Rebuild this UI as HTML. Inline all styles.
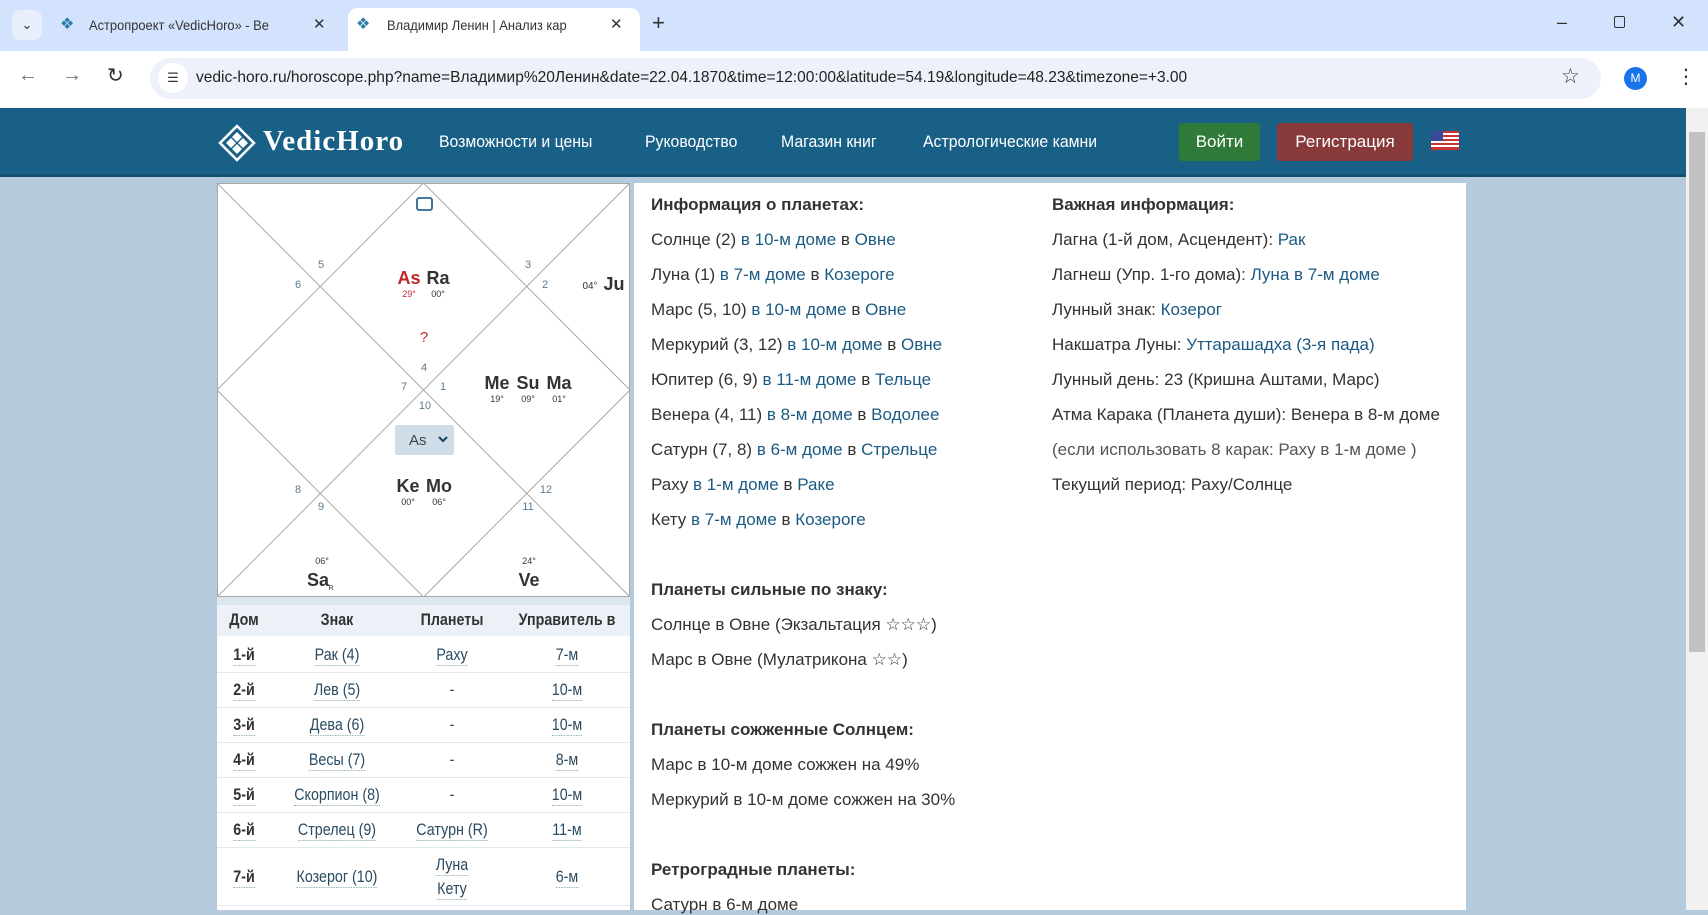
<!DOCTYPE html>
<html><head><meta charset="utf-8">
<style>
*{margin:0;padding:0;box-sizing:border-box}
body{width:1708px;height:910px;overflow:hidden;font-family:"Liberation Sans","DejaVu Sans",sans-serif;background:#b5cadd;position:relative}
.abs{position:absolute}
.tabs{left:0;top:0;width:1708px;height:51px;background:#d3e3fd}
.tab{top:8px;height:34px;font-size:14px;color:#333;line-height:34px}
.addr{left:0;top:51px;width:1708px;height:57px;background:#fff}
.omni{left:150px;top:58px;width:1451px;height:41px;border-radius:21px;background:#edf2fa}
.hdr{left:0;top:108px;width:1686px;height:69px;background:#196087;border-bottom:3px solid #145070}
.nav{color:#fff;font-size:17px;top:132px;transform-origin:left;transform:scaleX(.93);white-space:nowrap}
.btn{top:123px;height:38px;color:#fff;font-size:17px;line-height:38px;text-align:center;border-radius:3px}
.sb{left:1686px;top:108px;width:22px;height:802px;background:#f1f1f1}
.panel{background:#fff}
.txt{font-size:17px;color:#333;position:absolute;white-space:nowrap}
.txt a{color:#1b5a82;text-decoration:none}
.b{font-weight:bold;color:#333}
.tbl{font-size:17px;color:#2a4a60}
.c{position:absolute;transform:translateX(-50%) scaleX(.84);white-space:nowrap}
.u{border-bottom:1px dotted #8aa;}
.row{position:absolute;left:217px;width:413px;height:1px;background:#e3e9ee}
</style></head><body>
<div class="abs tabs"></div>
<div class="abs" style="left:12px;top:10px;width:30px;height:30px;border-radius:8px;background:#e8eefb;text-align:center;line-height:30px;font-size:13px;color:#333">&#8964;</div>
<div class="abs tab" style="left:60px;width:280px">
 <span style="position:absolute;left:0;top:0;color:#2a7fa8;font-size:16px">&#10070;</span>
 <span style="position:absolute;left:29px;transform-origin:left;transform:scaleX(.92)">Астропроект «VedicHoro» - Be</span>
 <span style="position:absolute;left:253px;font-size:15px">&#10005;</span></div>
<div class="abs" style="left:348px;top:8px;width:292px;height:43px;background:#fff;border-radius:10px 10px 0 0"></div>
<div class="abs tab" style="left:356px;width:280px">
 <span style="position:absolute;left:0;top:0;color:#2a7fa8;font-size:16px">&#10070;</span>
 <span style="position:absolute;left:31px;transform-origin:left;transform:scaleX(.92)">Владимир Ленин | Анализ кар</span>
 <span style="position:absolute;left:254px;font-size:15px">&#10005;</span></div>
<div class="abs" style="left:652px;top:10px;font-size:22px;color:#333">+</div>
<div class="abs" style="left:1557px;top:12px;font-size:18px;color:#333">&#8211;</div>
<div class="abs" style="left:1614px;top:16px;width:11px;height:12px;border:1.5px solid #333;border-radius:2px"></div>
<div class="abs" style="left:1671px;top:12px;font-size:18px;color:#333">&#10005;</div>

<div class="abs addr"></div>
<div class="abs" style="left:18px;top:64px;font-size:20px;color:#777">&#8592;</div>
<div class="abs" style="left:62px;top:64px;font-size:20px;color:#777">&#8594;</div>
<div class="abs" style="left:107px;top:63px;font-size:20px;color:#333">&#8635;</div>
<div class="abs omni"></div>
<div class="abs" style="left:158px;top:63px;width:30px;height:30px;border-radius:15px;background:#fff;font-size:13px;text-align:center;line-height:30px;color:#333">&#9776;</div>
<div class="abs" style="left:196px;top:69px;font-size:16px;color:#222;white-space:nowrap;transform-origin:left;transform:scaleX(.97)">vedic-horo.ru/horoscope.php?name=Владимир%20Ленин&amp;date=22.04.1870&amp;time=12:00:00&amp;latitude=54.19&amp;longitude=48.23&amp;timezone=+3.00</div>
<div class="abs" style="left:1561px;top:64px;font-size:21px;color:#333">&#9734;</div>
<div class="abs" style="left:1624px;top:67px;width:23px;height:23px;border-radius:12px;background:#1a73e8;color:#fff;font-size:12px;text-align:center;line-height:23px">M</div>
<div class="abs" style="left:1676px;top:64px;font-size:20px;color:#333">&#8942;</div>

<div class="abs hdr"></div>
<svg class="abs" style="left:218px;top:124px" width="38" height="38" viewBox="0 0 38 38"><g fill="none" stroke="#fff" stroke-width="2.5"><path d="M19 2 L36 19 L19 36 L2 19Z"/></g><g fill="#fff"><path d="M19 8 L24 13 L19 18 L14 13Z"/><path d="M13 14 L18 19 L13 24 L8 19Z"/><path d="M25 14 L30 19 L25 24 L20 19Z"/><path d="M19 20 L24 25 L19 30 L14 25Z"/></g></svg>
<div class="abs" style="left:263px;top:125px;font-family:'Liberation Serif',serif;font-size:29px;color:#fff;letter-spacing:1px;font-weight:bold">VedicHoro</div>
<div class="abs nav" style="left:439px">Возможности и цены</div>
<div class="abs nav" style="left:645px">Руководство</div>
<div class="abs nav" style="left:781px">Магазин книг</div>
<div class="abs nav" style="left:923px">Астрологические камни</div>
<div class="abs btn" style="left:1179px;width:81px;background:#2f7a38">Войти</div>
<div class="abs btn" style="left:1277px;width:136px;background:#883a3a">Регистрация</div>
<svg class="abs" style="left:1431px;top:131px" width="28" height="19" viewBox="0 0 28 19"><rect width="28" height="19" fill="#fff"/><g fill="#c33"><rect y="0" width="28" height="2"/><rect y="4" width="28" height="2"/><rect y="8" width="28" height="2"/><rect y="12" width="28" height="2"/><rect y="16" width="28" height="3"/></g><rect width="12" height="10" fill="#3a4a9a"/></svg>
<div class="abs sb"><div style="position:absolute;left:3px;top:24px;width:16px;height:520px;background:#c1c1c1"></div></div>

<div class="abs panel" style="left:217px;top:183px;width:413px;height:727px"></div>
<div class="abs panel" style="left:634px;top:183px;width:832px;height:727px"></div>

<svg class="abs" style="left:217px;top:183px" width="413" height="414" viewBox="0 0 413 414" font-family="Liberation Sans,sans-serif">
<g stroke="#a8a8a8" stroke-width="1" fill="none">
<rect x="0.5" y="0.5" width="412" height="413"/>
<line x1="0" y1="0" x2="413" y2="414"/><line x1="413" y1="0" x2="0" y2="414"/>
<path d="M206.5 0 L413 207 L206.5 414 L0 207Z"/>
</g>
<rect x="200" y="15" width="15" height="12" rx="2" fill="none" stroke="#2a6a90" stroke-width="1.8"/>
<g fill="#5b7b92" font-size="11" text-anchor="middle">
<text x="104" y="85">5</text><text x="81" y="105">6</text><text x="311" y="85">3</text><text x="328" y="105">2</text>
<text x="207" y="188">4</text><text x="187" y="207">7</text><text x="226" y="207">1</text><text x="208" y="226">10</text>
<text x="81" y="310">8</text><text x="104" y="327">9</text><text x="329" y="310">12</text><text x="311" y="327">11</text>
</g>
<g font-size="18" font-weight="bold" text-anchor="middle" fill="#333">
<text x="192" y="101" fill="#c0272d">As</text><text x="221" y="101">Ra</text>
<text x="207" y="159" fill="#c0272d" font-weight="normal" font-size="15">?</text>
<text x="280" y="206">Me</text><text x="311" y="206">Su</text><text x="342" y="206">Ma</text>
<text x="191" y="309">Ke</text><text x="222" y="309">Mo</text>
<text x="101" y="403">Sa</text><text x="312" y="403">Ve</text>
<text x="397" y="107">Ju</text>
</g>
<g font-size="9" text-anchor="middle" fill="#333">
<text x="192" y="114" fill="#c0272d">29°</text><text x="221" y="114">00°</text>
<text x="280" y="219">19°</text><text x="311" y="219">09°</text><text x="342" y="219">01°</text>
<text x="191" y="322">00°</text><text x="222" y="322">06°</text>
<text x="105" y="381">06°</text><text x="312" y="381">24°</text>
<text x="114" y="407" font-size="7">R</text>
<text x="373" y="106" font-size="10">04°</text>
</g>
<rect x="178" y="242" width="59" height="30" rx="2" fill="#cfdde9"/>
<text x="192" y="262" font-size="15" fill="#444">As</text>
<path d="M222 254 L226 258 L230 254" stroke="#1d4a66" stroke-width="2.2" fill="none"/>
</svg>

<div class="abs" style="left:217px;top:597px;width:413px;height:8px;background:#dce6ee"></div>
<div class="abs" style="left:217px;top:605px;width:413px;height:31px;background:#ebf1f6"></div>
<div class="tbl">
<div class="c b" style="left:244px;top:610px;color:#333">Дом</div>
<div class="c b" style="left:337px;top:610px;color:#333">Знак</div>
<div class="c b" style="left:452px;top:610px;color:#333">Планеты</div>
<div class="c b" style="left:567px;top:610px;color:#333">Управитель в</div>
</div>
<div class="row" style="top:672px"></div><div class="row" style="top:707px"></div><div class="row" style="top:742px"></div><div class="row" style="top:777px"></div><div class="row" style="top:812px"></div><div class="row" style="top:847px"></div><div class="row" style="top:905px"></div>
<div class="tbl">
<div class="c b u" style="left:244px;top:645px">1-й</div><div class="c u" style="left:337px;top:645px">Рак (4)</div><div class="c u" style="left:452px;top:645px">Раху</div><div class="c u" style="left:567px;top:645px">7-м</div>
<div class="c b u" style="left:244px;top:680px">2-й</div><div class="c u" style="left:337px;top:680px">Лев (5)</div><div class="c" style="left:452px;top:680px">-</div><div class="c u" style="left:567px;top:680px">10-м</div>
<div class="c b u" style="left:244px;top:715px">3-й</div><div class="c u" style="left:337px;top:715px">Дева (6)</div><div class="c" style="left:452px;top:715px">-</div><div class="c u" style="left:567px;top:715px">10-м</div>
<div class="c b u" style="left:244px;top:750px">4-й</div><div class="c u" style="left:337px;top:750px">Весы (7)</div><div class="c" style="left:452px;top:750px">-</div><div class="c u" style="left:567px;top:750px">8-м</div>
<div class="c b u" style="left:244px;top:785px">5-й</div><div class="c u" style="left:337px;top:785px">Скорпион (8)</div><div class="c" style="left:452px;top:785px">-</div><div class="c u" style="left:567px;top:785px">10-м</div>
<div class="c b u" style="left:244px;top:820px">6-й</div><div class="c u" style="left:337px;top:820px">Стрелец (9)</div><div class="c u" style="left:452px;top:820px">Сатурн (R)</div><div class="c u" style="left:567px;top:820px">11-м</div>
<div class="c b u" style="left:244px;top:867px">7-й</div><div class="c u" style="left:337px;top:867px">Козерог (10)</div><div class="c u" style="left:452px;top:855px">Луна</div><div class="c u" style="left:452px;top:879px">Кету</div><div class="c u" style="left:567px;top:867px">6-м</div>
</div>

<div class="txt b" style="left:651px;top:195px">Информация о планетах:</div>
<div class="txt" style="left:651px;top:230px">Солнце (2) <a>в 10-м доме</a> в <a>Овне</a></div>
<div class="txt" style="left:651px;top:265px">Луна (1) <a>в 7-м доме</a> в <a>Козероге</a></div>
<div class="txt" style="left:651px;top:300px">Марс (5, 10) <a>в 10-м доме</a> в <a>Овне</a></div>
<div class="txt" style="left:651px;top:335px">Меркурий (3, 12) <a>в 10-м доме</a> в <a>Овне</a></div>
<div class="txt" style="left:651px;top:370px">Юпитер (6, 9) <a>в 11-м доме</a> в <a>Тельце</a></div>
<div class="txt" style="left:651px;top:405px">Венера (4, 11) <a>в 8-м доме</a> в <a>Водолее</a></div>
<div class="txt" style="left:651px;top:440px">Сатурн (7, 8) <a>в 6-м доме</a> в <a>Стрельце</a></div>
<div class="txt" style="left:651px;top:475px">Раху <a>в 1-м доме</a> в <a>Раке</a></div>
<div class="txt" style="left:651px;top:510px">Кету <a>в 7-м доме</a> в <a>Козероге</a></div>
<div class="txt b" style="left:651px;top:580px">Планеты сильные по знаку:</div>
<div class="txt" style="left:651px;top:615px">Солнце в Овне (Экзальтация ☆☆☆)</div>
<div class="txt" style="left:651px;top:650px">Марс в Овне (Мулатрикона ☆☆)</div>
<div class="txt b" style="left:651px;top:720px">Планеты сожженные Солнцем:</div>
<div class="txt" style="left:651px;top:755px">Марс в 10-м доме сожжен на 49%</div>
<div class="txt" style="left:651px;top:790px">Меркурий в 10-м доме сожжен на 30%</div>
<div class="txt b" style="left:651px;top:860px">Ретроградные планеты:</div>
<div class="txt" style="left:651px;top:895px">Сатурн в 6-м доме</div>

<div class="txt b" style="left:1052px;top:195px">Важная информация:</div>
<div class="txt" style="left:1052px;top:230px">Лагна (1-й дом, Асцендент): <a>Рак</a></div>
<div class="txt" style="left:1052px;top:265px">Лагнеш (Упр. 1-го дома): <a>Луна в 7-м доме</a></div>
<div class="txt" style="left:1052px;top:300px">Лунный знак: <a>Козерог</a></div>
<div class="txt" style="left:1052px;top:335px">Накшатра Луны: <a>Уттарашадха (3-я пада)</a></div>
<div class="txt" style="left:1052px;top:370px">Лунный день: 23 (Кришна Аштами, Марс)</div>
<div class="txt" style="left:1052px;top:405px">Атма Карака (Планета души): Венера в 8-м доме</div>
<div class="txt" style="left:1052px;top:440px;color:#555">(если использовать 8 карак: Раху в 1-м доме )</div>
<div class="txt" style="left:1052px;top:475px">Текущий период: Раху/Солнце</div>
</body></html>
